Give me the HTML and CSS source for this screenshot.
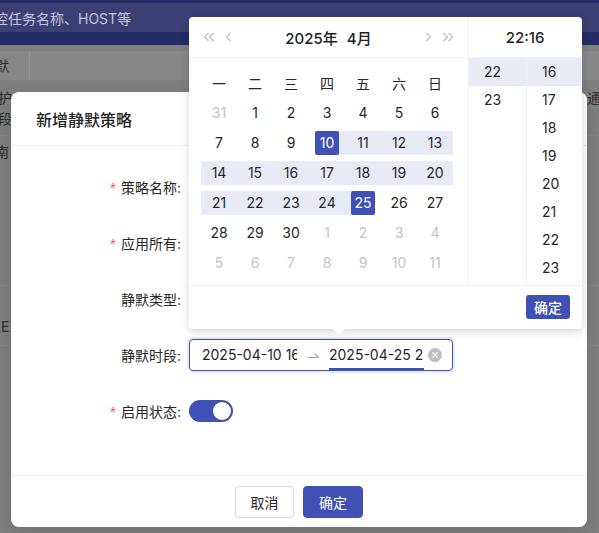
FILE: index.html
```html
<!DOCTYPE html>
<html lang="zh-CN">
<head>
<meta charset="utf-8">
<title>新增静默策略</title>
<link rel="stylesheet" href="styles.css">
</head>
<body>
<div class="page">
  <div class="topbar"><div class="search"><span class="search-text">控任务名称、HOST等</span></div></div>
  <div class="table">
    <div class="thead"><div class="col1">默</div></div>
    <div class="trow r1"><div class="col1">护<br>段</div><div class="right">通</div></div>
    <div class="trow r2"><div class="col1">南</div></div>
    <div class="trow r3"><div class="col1">LE</div></div>
  </div>
</div>

<div class="modal">
  <div class="modal-header">新增静默策略</div>
  <div class="modal-body">
    <div class="form-row"><div class="label"><span class="req">*</span>策略名称:</div></div>
    <div class="form-row"><div class="label"><span class="req">*</span>应用所有:</div></div>
    <div class="form-row"><div class="label">静默类型:</div></div>
    <div class="form-row">
      <div class="label">静默时段:</div>
      <div class="range">
        <div class="ri"><span class="rt">2025-04-10 16:00:00</span></div>
        <svg class="sep" width="12" height="8" viewBox="0 0 12 8"><path d="M0.5 6.5H11.5L7.5 2.5" fill="none" stroke="#a6a6a6" stroke-width="1.2"/></svg>
        <div class="ri active"><span class="rt">2025-04-25 22:16:00</span></div>
        <svg class="clear" width="14" height="14" viewBox="0 0 14 14"><circle cx="7" cy="7" r="7" fill="#bfbfbf"/><path d="M4.6 4.6L9.4 9.4M9.4 4.6L4.6 9.4" stroke="#fff" stroke-width="1.3" stroke-linecap="round"/></svg>
      </div>
    </div>
    <div class="form-row">
      <div class="label"><span class="req">*</span>启用状态:</div>
      <div class="switch"><span class="knob"></span></div>
    </div>
  </div>
  <div class="modal-footer">
    <button class="btn">取消</button>
    <button class="btn primary">确定</button>
  </div>
</div>

<div class="picker">
  <div class="picker-main">
    <div class="cal">
      <div class="cal-header">
        <div class="nav">
          <svg width="12" height="10" viewBox="0 0 12 10"><path d="M5.5 1L1.5 5L5.5 9M10.5 1L6.5 5L10.5 9" fill="none" stroke="#bfbfbf" stroke-width="1.3"/></svg>
          <svg width="7" height="10" viewBox="0 0 7 10"><path d="M5.5 1L1.5 5L5.5 9" fill="none" stroke="#bfbfbf" stroke-width="1.3"/></svg>
        </div>
        <div class="title"><span>2025年</span><span>4月</span></div>
        <div class="nav">
          <svg width="7" height="10" viewBox="0 0 7 10"><path d="M1.5 1L5.5 5L1.5 9" fill="none" stroke="#bfbfbf" stroke-width="1.3"/></svg>
          <svg width="12" height="10" viewBox="0 0 12 10"><path d="M1.5 1L5.5 5L1.5 9M6.5 1L10.5 5L6.5 9" fill="none" stroke="#bfbfbf" stroke-width="1.3"/></svg>
        </div>
      </div>
      <div class="cal-body">
        <div class="grid">
          <div class="wd">一</div><div class="wd">二</div><div class="wd">三</div><div class="wd">四</div><div class="wd">五</div><div class="wd">六</div><div class="wd">日</div>
          <div class="cell off"><span class="d">31</span></div><div class="cell"><span class="d">1</span></div><div class="cell"><span class="d">2</span></div><div class="cell"><span class="d">3</span></div><div class="cell"><span class="d">4</span></div><div class="cell"><span class="d">5</span></div><div class="cell"><span class="d">6</span></div>
          <div class="cell"><span class="d">7</span></div><div class="cell"><span class="d">8</span></div><div class="cell"><span class="d">9</span></div><div class="cell start"><span class="d sel">10</span></div><div class="cell in"><span class="d">11</span></div><div class="cell in"><span class="d">12</span></div><div class="cell in"><span class="d">13</span></div>
          <div class="cell in"><span class="d">14</span></div><div class="cell in"><span class="d">15</span></div><div class="cell in"><span class="d">16</span></div><div class="cell in"><span class="d">17</span></div><div class="cell in"><span class="d">18</span></div><div class="cell in"><span class="d">19</span></div><div class="cell in"><span class="d">20</span></div>
          <div class="cell in"><span class="d">21</span></div><div class="cell in"><span class="d">22</span></div><div class="cell in"><span class="d">23</span></div><div class="cell in"><span class="d">24</span></div><div class="cell end"><span class="d sel">25</span></div><div class="cell"><span class="d">26</span></div><div class="cell"><span class="d">27</span></div>
          <div class="cell"><span class="d">28</span></div><div class="cell"><span class="d">29</span></div><div class="cell"><span class="d">30</span></div><div class="cell off"><span class="d">1</span></div><div class="cell off"><span class="d">2</span></div><div class="cell off"><span class="d">3</span></div><div class="cell off"><span class="d">4</span></div>
          <div class="cell off"><span class="d">5</span></div><div class="cell off"><span class="d">6</span></div><div class="cell off"><span class="d">7</span></div><div class="cell off"><span class="d">8</span></div><div class="cell off"><span class="d">9</span></div><div class="cell off"><span class="d">10</span></div><div class="cell off"><span class="d">11</span></div>
        </div>
      </div>
    </div>
    <div class="time">
      <div class="time-header">22:16</div>
      <div class="time-cols">
        <div class="tcol hours">
          <div class="ti on">22</div><div class="ti">23</div>
        </div>
        <div class="tcol mins">
          <div class="ti on">16</div><div class="ti">17</div><div class="ti">18</div><div class="ti">19</div><div class="ti">20</div><div class="ti">21</div><div class="ti">22</div><div class="ti">23</div>
        </div>
      </div>
    </div>
  </div>
  <div class="picker-footer"><button class="ok">确定</button></div>
  <div class="arrow"></div>
</div>
</body>
</html>
```

FILE: styles.css
```css
* { box-sizing: border-box; }
html, body { margin: 0; padding: 0; }
body {
  width: 599px;
  height: 533px;
  overflow: hidden;
  position: relative;
  background: #7f7f7f;
  font-family: "Inter", "Noto Sans CJK SC", sans-serif;
  font-size: 14px;
  color: #262626;
}

/* background page (already dimmed by the mask) */
.page { width: 599px; }
.topbar { height: 45px; background: #232c66; padding-top: 3px; }
.search { height: 29px; background: #3b4074; display: flex; align-items: center; overflow: hidden; }
.search-text { margin-left: -6px; color: #c3c6d9; font-size: 14px; white-space: nowrap; }
.table { margin-top: 6px; }
.thead { height: 29px; background: #878787; display: flex; align-items: center; }
.col1 { width: 35px; margin-left: -5px; color: #2a2a2a; line-height: 21px; }
.thead .col1 { height: 29px; line-height: 29px; border-right: 1px solid #939393; }
.trow { display: flex; justify-content: space-between; background: #7f7f7f; border-bottom: 1px solid #868686; }
.r1 { height: 56px; padding-top: 7px; }
.r1 .col1 { margin-left: -2px; }
.right { margin-right: -2px; color: #2a2a2a; line-height: 21px; }
.r2 { height: 150px; padding-top: 5px; }
.r3 { height: 60px; padding-top: 30px; }
.r3 .col1 { margin-left: -7px; }

/* modal */
.modal {
  position: absolute;
  left: 11px;
  top: 92px;
  width: 576px;
  height: 435px;
  background: #fff;
  border-radius: 8px;
  display: flex;
  flex-direction: column;
  box-shadow: 0 4px 16px rgba(0,0,0,0.12);
}
.modal-header {
  height: 54px;
  padding-left: 25px;
  display: flex;
  align-items: center;
  border-bottom: 1px solid #ededed;
  font-size: 16px;
  font-weight: 500;
  color: #222;
}
.modal-body { flex: 1; padding-top: 25px; }
.form-row { display: flex; align-items: center; height: 32px; margin-bottom: 24px; }
.label { width: 170px; margin-right: 8px; text-align: right; color: #262626; white-space: nowrap; }
.req { color: #ff4d4f; margin-right: 5px; font-size: 15px; font-family: "Liberation Sans", sans-serif; }

.range {
  width: 264px;
  height: 32px;
  border: 1px solid #3f51b5;
  border-radius: 4px;
  box-shadow: 0 0 0 2px rgba(63,81,181,0.12);
  display: flex;
  align-items: center;
  padding-left: 12px;
}
.ri {
  width: 95px;
  height: 30px;
  line-height: 29px;
  overflow: hidden;
  white-space: nowrap;
  border-bottom: 2px solid transparent;
  color: #262626;
}
.rt { display: block; width: 95px; overflow: hidden; }
.ri.active { border-bottom-color: #3f51b5; }
.sep { margin: 0 10px; flex: none; }
.clear { margin-left: 4px; flex: none; }

.switch {
  width: 44px;
  height: 22px;
  border-radius: 11px;
  background: #3f51b5;
  display: flex;
  justify-content: flex-end;
  align-items: center;
  padding: 2px;
}
.knob { width: 18px; height: 18px; border-radius: 50%; background: #fff; }

.modal-footer {
  height: 52px;
  border-top: 1px solid #ededed;
  display: flex;
  justify-content: center;
  align-items: center;
  gap: 9px;
}
.btn {
  width: 59px;
  height: 32px;
  border: 1px solid #d9d9d9;
  border-radius: 4px;
  background: #fff;
  font-family: inherit;
  font-size: 14px;
  color: #262626;
  padding: 0;
}
.btn.primary { background: #3f51b5; border-color: #3f51b5; color: #fff; width: 60px; }

/* date picker popup */
.picker {
  position: absolute;
  left: 189px;
  top: 17px;
  width: 393px;
  height: 312px;
  background: #fff;
  border-radius: 4px;
  box-shadow: 0 3px 10px rgba(0,0,0,0.16);
}
.picker-main { display: flex; height: 269px; border-bottom: 1px solid #f0f0f0; }
.cal { width: 280px; border-right: 1px solid #f0f0f0; }
.cal-header {
  height: 41px;
  border-bottom: 1px solid #f0f0f0;
  display: flex;
  align-items: center;
  justify-content: space-between;
  padding: 0 14px;
}
.nav { display: flex; align-items: center; gap: 10px; width: 29px; }
.nav svg { display: block; }
.title { font-size: 15px; font-weight: 500; color: #222; display: flex; gap: 9px; }
.cal-body { padding: 10px 16px 0 12px; }
.grid { display: grid; grid-template-columns: repeat(7, 36px); grid-auto-rows: 30px; }
.wd { display: flex; align-items: center; justify-content: center; color: #262626; }
.cell {
  display: flex;
  align-items: center;
  justify-content: center;
  background-repeat: no-repeat;
  background-position: center;
}
.cell.in { background-image: linear-gradient(#e8eaf6, #e8eaf6); background-size: 100% 24px; }
.cell.start { background-image: linear-gradient(#e8eaf6, #e8eaf6); background-size: 30px 24px; background-position: right center; }
.cell.end { background-image: linear-gradient(#e8eaf6, #e8eaf6); background-size: 30px 24px; background-position: left center; }
.d { width: 24px; height: 24px; line-height: 24px; text-align: center; border-radius: 2px; color: #262626; }
.cell.off .d { color: #c4c4c4; }
.d.sel { background: #3f51b5; color: #fff; }

.time { width: 112px; }
.time-header {
  height: 41px;
  border-bottom: 1px solid #f0f0f0;
  display: flex;
  align-items: center;
  justify-content: center;
  font-size: 15px;
  font-weight: 500;
  color: #222;
}
.time-cols { display: flex; height: 227px; }
.tcol { height: 227px; }
.hours { width: 58px; border-right: 1px solid #f0f0f0; }
.mins { width: 54px; }
.ti { height: 28px; line-height: 28px; padding-left: 15px; color: #262626; }
.ti.on { background: #e8eaf6; }

.picker-footer { height: 43px; display: flex; justify-content: flex-end; align-items: flex-start; padding: 9px 12px 0 0; }
.ok {
  width: 44px;
  height: 24px;
  border: none;
  border-radius: 3px;
  background: #3f51b5;
  color: #fff;
  font-family: inherit;
  font-size: 14px;
  font-weight: 500;
  padding: 0;
}
.arrow {
  position: absolute;
  left: 144px;
  bottom: -6px;
  width: 0;
  height: 0;
  border-left: 6px solid transparent;
  border-right: 6px solid transparent;
  border-top: 6px solid #fff;
}
```
